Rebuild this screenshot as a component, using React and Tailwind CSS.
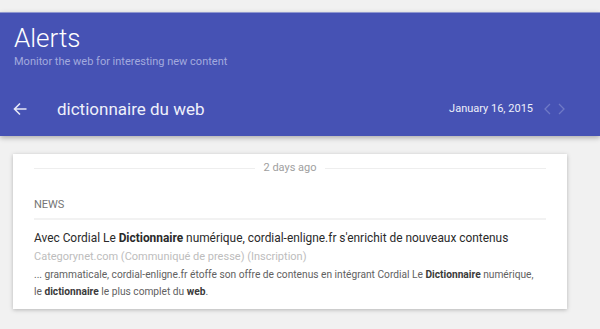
import React from 'react'

const font = { fontFamily: 'Roboto, "Noto Sans", Arial, sans-serif' }

function ArrowLeft() {
  return (
    <svg width="14" height="14" viewBox="0 0 14 14" fill="none" stroke="currentColor" strokeWidth="1.6">
      <path d="M13.5 7H1.5M7 1.5L1.5 7L7 12.5" />
    </svg>
  )
}

function Chevron({ dir }) {
  return (
    <svg width="7" height="12" viewBox="0 0 7 12" fill="none" stroke="currentColor" strokeWidth="1.3">
      {dir === 'left' ? <path d="M6 1L1 6L6 11" /> : <path d="M1 1L6 6L1 11" />}
    </svg>
  )
}

export default function App() {
  return (
    <div className="h-[329px] w-[600px] overflow-hidden bg-[#f1f1f1] pt-[12px]" style={font}>
      {/* Header */}
      <div className="relative z-10 bg-[#4652b4] border-t border-[#8f97cf] shadow-[0_2px_5px_rgba(0,0,0,0.28)] text-white">
        <div className="px-[14px] pt-[10px]">
          <div className="text-[26px] font-light leading-[30px]">Alerts</div>
          <div className="mt-[2px] text-[11px] leading-[14px] text-[#a3aade]">Monitor the web for interesting new content</div>
        </div>
        <div className="mt-[16px] h-[48px] flex items-center pl-[13px] pr-[35px]">
          <span className="text-[#e6e8f6]"><ArrowLeft /></span>
          <span className="ml-[30px] text-[17px] leading-[20px] text-[#eef0fa]">dictionnaire du web</span>
          <span className="ml-auto text-[11px] text-[#eef0fa]">January 16, 2015</span>
          <span className="ml-[11px] flex items-center gap-[7px] text-[#6f79c6]">
            <Chevron dir="left" />
            <Chevron dir="right" />
          </span>
        </div>
        <div className="h-[3px]" />
      </div>

      {/* Card */}
      <div className="ml-[13px] mt-[18px] w-[554px] bg-white shadow-[0_1px_4px_rgba(0,0,0,0.25)] px-[21px] pb-[9px]">
        <div className="pt-[7px] flex items-center gap-[8px]">
          <div className="flex-1 h-px bg-[#eeeeee]" />
          <span className="text-[11px] leading-[14px] text-[#a0a0a0]">2 days ago</span>
          <div className="flex-1 h-px bg-[#eeeeee]" />
        </div>
        <div className="mt-[23px] text-[11px] leading-[14px] text-[#757575] uppercase">News</div>
        <div className="mt-[6px] h-[2px] bg-[#f2f2f2]" />
        <div className="mt-[9px] text-[11.9px] leading-[18px] text-[#2a2a2a] whitespace-nowrap">
          Avec Cordial Le <b className="font-bold">Dictionnaire</b> numérique, cordial-enligne.fr s'enrichit de nouveaux contenus
        </div>
        <div className="mt-[1px] text-[11px] leading-[18px] text-[#bdbdbd]">Categorynet.com (Communiqué de presse) (Inscription)</div>
        <div className="text-[10.2px] leading-[17px] text-[#616161]">
          ... grammaticale, cordial-enligne.fr étoffe son offre de contenus en intégrant Cordial Le <b className="font-bold text-[#3a3a3a]">Dictionnaire</b> numérique,<br />le <b className="font-bold text-[#3a3a3a]">dictionnaire</b> le plus complet du <b className="font-bold text-[#3a3a3a]">web</b>.
        </div>
      </div>
    </div>
  )
}
